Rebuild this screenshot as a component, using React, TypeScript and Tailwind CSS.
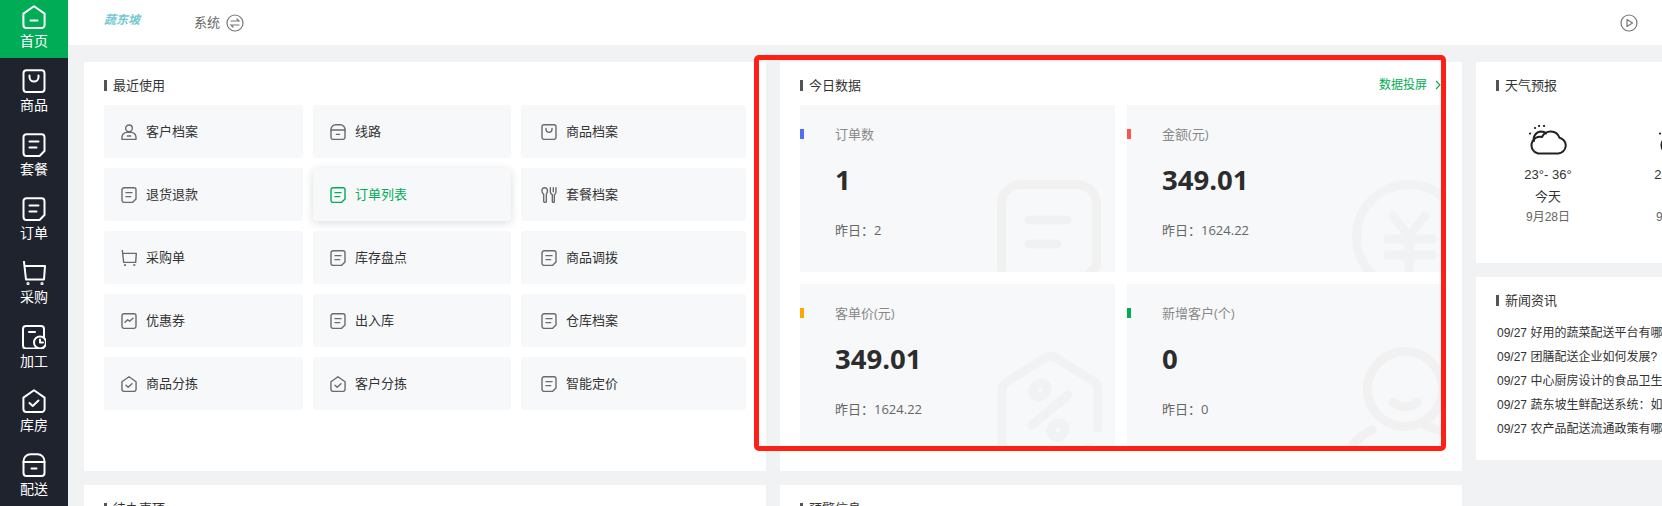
import React from 'react';

type IconName = 'home' | 'bag' | 'doc' | 'cart' | 'clock' | 'check' | 'box' | 'user' | 'fork' | 'chart';

function Icon({ name, size = 24, sw = 2, color = '#fff', bg = '#1f232e' }: { name: IconName; size?: number; sw?: number; color?: string; bg?: string }) {
  const p = { fill: 'none', stroke: color, strokeWidth: sw, strokeLinecap: 'round' as const, strokeLinejoin: 'round' as const };
  return (
    <svg width={size} height={size} viewBox="0 0 24 24" className="shrink-0">
      {name === 'home' && (
        <g {...p}>
          <path d="M12 1.200 22.600 8.600V20a3 3 0 0 1-3 3H4.400a3 3 0 0 1-3-3V8.600Z" />
          <path d="M8.500 15.500h7" />
        </g>
      )}
      {name === 'bag' && (
        <g {...p}>
          <rect x="1.500" y="1.200" width="21" height="21.800" rx="3" />
          <path d="M7.500 6.500V8a4.500 4.500 0 0 0 9 0V6.500" />
        </g>
      )}
      {name === 'doc' && (
        <g {...p}>
          <path d="M4.500 1.200h15a3 3 0 0 1 3 3V18l-5 5H4.500a3 3 0 0 1-3-3V4.200a3 3 0 0 1 3-3Z" />
          <path d="M7.500 8.500h9M7.500 14.500h7" />
        </g>
      )}
      {name === 'cart' && (
        <g {...p}>
          <path d="M2 .8 4 18.500h18L23 5H2.500" />
          <circle cx="6" cy="22.500" r=".6" />
          <circle cx="20" cy="22.500" r=".6" />
        </g>
      )}
      {name === 'clock' && (
        <g {...p}>
          <rect x="1" y="1" width="21" height="22.500" rx="3" />
          <path d="M7 7h6" />
          <circle cx="18" cy="17.500" r="6" fill={bg} />
          <path d="M18 14.500v3h3" />
        </g>
      )}
      {name === 'check' && (
        <g {...p}>
          <path d="M12 1.200 22.600 8.600V20a3 3 0 0 1-3 3H4.400a3 3 0 0 1-3-3V8.600Z" />
          <path d="m7.500 14 3.200 3 5.800-5.500" />
        </g>
      )}
      {name === 'box' && (
        <g {...p}>
          <path d="M1.500 8.500a7 7 0 0 1 7-7.300h7a7 7 0 0 1 7 7.300V20a3 3 0 0 1-3 3h-15a3 3 0 0 1-3-3Z" />
          <path d="M1.500 9h21M9.500 15.500h5" />
        </g>
      )}
      {name === 'user' && (
        <g {...p}>
          <circle cx="12" cy="6.500" r="5" />
          <path d="M1.500 20a8 8 0 0 1 6.500-7.500h8a8 8 0 0 1 6.500 7.500v3h-21Z" />
          <path d="M9.500 18h5" />
        </g>
      )}
      {name === 'fork' && (
        <g {...p}>
          <path d="M5.500 1.200a4 4 0 0 1 4 5c0 3-1.500 4-1.500 5v10a1.800 1.800 0 0 1-4 0v-10c0-1-2.500-2-2.500-5a4 4 0 0 1 4-5Z" />
          <path d="M14 1.200v6c0 3 2 3.500 3 4.500v10a1.500 1.500 0 0 0 3 0v-10c1-1 2.500-1.500 2.500-4.500v-6M18.500 1.200v6" />
        </g>
      )}
      {name === 'chart' && (
        <g {...p}>
          <rect x="1.500" y="1.200" width="21" height="21.800" rx="3" />
          <path d="m6 14 4-4 3 2.500L18 8" />
        </g>
      )}
    </svg>
  );
}

const navItems: { label: string; icon: IconName; active?: boolean }[] = [
  { label: '首页', icon: 'home', active: true },
  { label: '商品', icon: 'bag' },
  { label: '套餐', icon: 'doc' },
  { label: '订单', icon: 'doc' },
  { label: '采购', icon: 'cart' },
  { label: '加工', icon: 'clock' },
  { label: '库房', icon: 'check' },
  { label: '配送', icon: 'box' },
];

const shortcuts: { label: string; icon: IconName; active?: boolean }[] = [
  { label: '客户档案', icon: 'user' },
  { label: '线路', icon: 'box' },
  { label: '商品档案', icon: 'bag' },
  { label: '退货退款', icon: 'doc' },
  { label: '订单列表', icon: 'doc', active: true },
  { label: '套餐档案', icon: 'fork' },
  { label: '采购单', icon: 'cart' },
  { label: '库存盘点', icon: 'doc' },
  { label: '商品调拨', icon: 'doc' },
  { label: '优惠券', icon: 'chart' },
  { label: '出入库', icon: 'doc' },
  { label: '仓库档案', icon: 'doc' },
  { label: '商品分拣', icon: 'check' },
  { label: '客户分拣', icon: 'check' },
  { label: '智能定价', icon: 'doc' },
];

const news = [
  '好用的蔬菜配送平台有哪些',
  '团膳配送企业如何发展?',
  '中心厨房设计的食品卫生要求',
  '蔬东坡生鲜配送系统：如何提升',
  '农产品配送流通政策有哪些',
];

function CardTitle({ children }: { children: React.ReactNode }) {
  return (
    <div className="flex items-center gap-[6px] h-[16px] text-[13px] leading-[16px] text-[#333]">
      <span className="w-[3px] h-[11px] bg-[#555]" />
      {children}
    </div>
  );
}

function GhostDoc() {
  return (
    <svg width="104" height="112" viewBox="0 0 104 112" className="absolute right-[14px] top-[75px]" fill="none" stroke="#f1f1f2" strokeWidth="9" strokeLinecap="round">
      <path d="M24 4.500h56a19.500 19.500 0 0 1 19.500 19.500v62L78 107.500H24A19.500 19.500 0 0 1 4.500 88V24A19.500 19.500 0 0 1 24 4.500Z" />
      <path d="M32 40h38M32 64h28" />
    </svg>
  );
}

function GhostYuan() {
  return (
    <svg width="116" height="116" viewBox="0 0 116 116" className="absolute left-[225px] top-[75px]" fill="none" stroke="#f1f2f4" strokeWidth="9" strokeLinecap="round" strokeLinejoin="round">
      <circle cx="57" cy="57" r="52.500" />
      <path d="M41 36 57 56 73 36M36 59h44M36 75h44M57 56v56" />
    </svg>
  );
}

function GhostTag() {
  return (
    <svg width="108" height="118" viewBox="0 0 108 118" className="absolute left-[197px] top-[68px]" fill="none" stroke="#f1f2f4" strokeWidth="9" strokeLinecap="round" strokeLinejoin="round">
      <path d="M101 76V38c0-4-2-7-5-9L60 6.500a12 12 0 0 0-13 0L11 29c-3 2-6 5-6 9v50c0 8 4 13 10 17l13 9M92 96l-8 8" />
      <ellipse cx="43" cy="38" rx="7.500" ry="6.500" transform="rotate(-38 43 38)" />
      <ellipse cx="61" cy="78" rx="7.500" ry="6.500" transform="rotate(-38 61 78)" />
      <path d="M71 43 35 73" />
    </svg>
  );
}

function GhostPerson() {
  return (
    <svg width="110" height="110" viewBox="0 0 110 110" className="absolute left-[222px] top-[62px]" fill="none" stroke="#f1f1f2" strokeWidth="9" strokeLinecap="round">
      <circle cx="56" cy="43" r="37.500" />
      <path d="M44 56c6 6 18 6 24 0" />
      <path d="M78 81c10 1 18 4 28 12M23 84C15 88 6 95 0 103" />
    </svg>
  );
}

function StatTile({ label, value, prev, accent, ghost }: { label: string; value: string; prev: string; accent: string; ghost: React.ReactNode }) {
  return (
    <div className="relative h-[167px] bg-[#f7f8fa] overflow-hidden pl-[35px] pt-[19px]">
      <span className={`absolute left-0 top-[24px] w-[4px] h-[10px] ${accent}`} />
      {ghost}
      <div className="relative text-[13px] leading-[20px] text-[#888]">{label}</div>
      <div className="relative mt-[11px] text-[27.5px] leading-[50px] font-bold text-[#2c2c2c]">{value}</div>
      <div className="relative mt-[15px] text-[13px] leading-[20px] text-[#666]">{prev}</div>
    </div>
  );
}

function WeatherIcon() {
  return (
    <svg width="38" height="30" viewBox="0 0 38 30" fill="none" stroke="#222" strokeWidth="2" strokeLinecap="round" strokeLinejoin="round">
      <path d="M9 28.500h20a8 8 0 0 0 1.500-15.800A9.500 9.500 0 0 0 13 12a8 8 0 0 0-4 16.500Z" />
      <path d="M5 16a7.500 7.500 0 0 1 7-9.500c2 0 4 .8 5 2" />
      <path d="M1 8.500h.1M6 3h.1M10 1h.1M15 1h.1" strokeWidth="2.200" />
    </svg>
  );
}

export default function App() {
  return (
    <div className="relative flex h-screen w-full overflow-hidden bg-[#f1f2f4] [font-family:'Open_Sans','Noto_Sans_CJK_SC',sans-serif]">
      <aside className="w-[68px] shrink-0 bg-[#1f232e] -mt-[6px]">
        {navItems.map(item => (
          <div key={item.label} className={`h-[64px] flex flex-col items-center pt-[11px] ${item.active ? 'bg-[#00ad56]' : ''}`}>
            <Icon name={item.icon} bg={item.active ? '#00ad56' : '#1f232e'} />
            <span className="mt-[2px] text-[14px] leading-[20px] text-white">{item.label}</span>
          </div>
        ))}
      </aside>

      <div className="flex-1 min-w-0 flex flex-col">
        <header className="h-[45px] shrink-0 bg-white flex items-center pl-[36px] pr-[24px]">
          <span className="mb-[5px] w-[90px] text-[12px] font-bold italic text-[#74c8d2]">蔬东坡</span>
          <span className="text-[13px] text-[#666]">系统</span>
          <svg width="18" height="18" viewBox="0 0 18 18" className="ml-[6px]" fill="none" stroke="#777" strokeWidth="1.200" strokeLinecap="round">
            <circle cx="9" cy="9" r="8" />
            <path d="M5 7h8l-2-2M13 11H5l2 2" />
          </svg>
          <svg width="18" height="18" viewBox="0 0 18 18" className="ml-auto" fill="none" stroke="#777" strokeWidth="1.200" strokeLinejoin="round">
            <circle cx="9" cy="9" r="8" />
            <path d="M7 5.500v7l5.500-3.500Z" />
          </svg>
        </header>

        <main className="flex-1 min-h-0 flex gap-[14px] pl-[16px] pt-[17px]">
          <div className="w-[682px] shrink-0 flex flex-col gap-[14px]">
            <section className="h-[409px] shrink-0 bg-white pl-[20px] pt-[15px]">
              <CardTitle>最近使用</CardTitle>
              <div className="mt-[12px] grid grid-cols-[199px_198px_225px] auto-rows-[53px] gap-[10px]">
                {shortcuts.map((item, i) => (
                  <div key={item.label} className={`flex items-center rounded-[3px] bg-[#f7f8fa] text-[13px] gap-[9px] ${i % 3 === 2 ? 'pl-[20px]' : 'pl-[17px]'} ${item.active ? 'text-[#00ad56] shadow-[0_2px_8px_rgba(0,0,0,0.14)]' : 'text-[#333]'}`}>
                    <Icon name={item.icon} size={16} sw={2.100} color={item.active ? '#00ad56' : '#6b6b6b'} bg="#f7f8fa" />
                    {item.label}
                  </div>
                ))}
              </div>
            </section>
            <section className="flex-1 bg-white pl-[20px] pt-[15px]">
              <CardTitle>待办事项</CardTitle>
            </section>
          </div>

          <div className="w-[682px] shrink-0 flex flex-col gap-[14px]">
            <section className="h-[409px] shrink-0 bg-white px-[20px] pt-[15px]">
              <div className="flex items-center justify-between h-[16px]">
                <CardTitle>今日数据</CardTitle>
                <div className="flex items-center gap-[8px] pr-[1px] text-[12px] leading-[16px] text-[#00ad56]">
                  数据投屏
                  <svg width="6" height="10" viewBox="0 0 6 10" fill="none" stroke="#00ad56" strokeWidth="1.100">
                    <path d="m1 1 4 4-4 4" />
                  </svg>
                </div>
              </div>
              <div className="mt-[12px] grid grid-cols-2 gap-[12px]">
                <StatTile label="订单数" value="1" prev="昨日：2" accent="bg-[#4f6ef7]" ghost={<GhostDoc />} />
                <StatTile label="金额(元)" value="349.01" prev="昨日：1624.22" accent="bg-[#ff5447]" ghost={<GhostYuan />} />
                <StatTile label="客单价(元)" value="349.01" prev="昨日：1624.22" accent="bg-[#ffa600]" ghost={<GhostTag />} />
                <StatTile label="新增客户(个)" value="0" prev="昨日：0" accent="bg-[#00ad56]" ghost={<GhostPerson />} />
              </div>
            </section>
            <section className="flex-1 bg-white pl-[20px] pt-[15px]">
              <CardTitle>预警信息</CardTitle>
            </section>
          </div>

          <div className="flex-1 min-w-0 flex flex-col gap-[14px]">
            <section className="h-[201px] shrink-0 bg-white pl-[20px] pt-[15px] overflow-hidden">
              <CardTitle>天气预报</CardTitle>
              <div className="mt-[32px] flex -ml-[13px] [font-family:'Liberation_Sans','Noto_Sans_CJK_SC',sans-serif]">
                {[0, 1].map(i => (
                  <div key={i} className="w-[130px] shrink-0 flex flex-col items-center">
                    <WeatherIcon />
                    <span className="mt-[10px] text-[13px] leading-[20px] text-[#333]">23°- 36°</span>
                    <span className="mt-[2px] text-[13px] leading-[20px] text-[#333]">今天</span>
                    <span className="text-[12px] leading-[20px] text-[#666]">9月28日</span>
                  </div>
                ))}
              </div>
            </section>
            <section className="h-[183px] shrink-0 bg-white pl-[21px] pt-[15px] overflow-hidden">
              <div className="-ml-[1px]">
                <CardTitle>新闻资讯</CardTitle>
              </div>
              <ul className="mt-[13px] [font-family:'Liberation_Sans','Noto_Sans_CJK_SC',sans-serif]">
                {news.map(text => (
                  <li key={text} className="h-[24px] leading-[24px] text-[12px] text-[#333] whitespace-nowrap">
                    09/27 {text}
                  </li>
                ))}
              </ul>
            </section>
          </div>
        </main>
      </div>

      <div className="absolute left-[754px] top-[55px] w-[692px] h-[396px] rounded-[5px] border-[5px] border-[#ff2015]" />
    </div>
  );
}
